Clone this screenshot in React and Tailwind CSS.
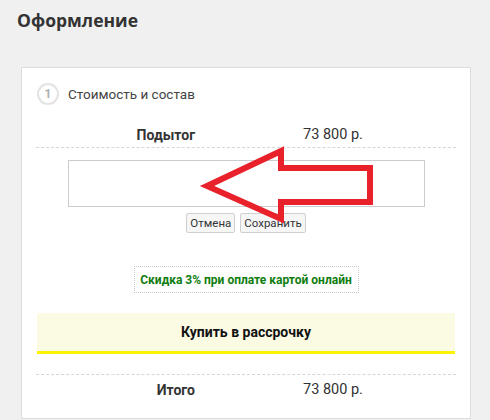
import React from 'react';

const font = { fontFamily: 'Roboto, "Noto Sans", sans-serif' };

function SumRow({ label, value, className = '' }) {
  return (
    <div className={`flex items-center ${className}`}>
      <div className="w-[159px] text-right text-[14px] font-bold text-[#333]">{label}</div>
      <div className="ml-[108px] text-[14.5px] text-[#333]">{value}</div>
    </div>
  );
}

function RedArrow() {
  return (
    <svg className="pointer-events-none absolute left-0 top-0" width="490" height="420" viewBox="0 0 490 420">
      <polygon
        points="207,186 281,151 281,168 370,168 370,202 281,202 281,219"
        fill="none"
        stroke="#e8212b"
        strokeWidth="6"
        strokeLinejoin="miter"
        strokeMiterlimit="10"
      />
    </svg>
  );
}

export default function App() {
  return (
    <div className="relative min-h-[420px] w-[490px] overflow-hidden bg-[#f0f0f0]" style={font}>
      <h1
        className="pl-[17px] pt-[8px] text-[17.5px] font-bold leading-[24px] text-[#333]"
        style={{ fontFamily: '"Open Sans", sans-serif' }}
      >
        Оформление
      </h1>

      <div className="ml-[21px] mt-[35px] w-[450px] border border-[#dddddd] bg-white px-[14px] pb-[13px]">
        <div className="flex items-center pt-[15px]">
          <div className="ml-[1px] flex h-[22px] w-[22px] items-center justify-center rounded-full border-2 border-[#e3e3e3] text-[12px] font-bold text-[#b0b0b0]">
            1
          </div>
          <span className="ml-[9px] text-[13.5px] text-[#444]">Стоимость и состав</span>
        </div>

        <SumRow label="Подытог" value="73 800 р." className="mt-[18px] h-[25px] border-b border-dashed border-[#d6d6d6]" />

        <div className="mx-auto mt-[12px] h-[47px] w-[357px] border border-[#cccccc] bg-white" />

        <div className="mt-[6px] flex justify-center gap-[5px]">
          <button className="h-[20px] rounded-[2px] border border-[#d0d0d0] bg-[#f6f6f6] px-[3px] text-[11.5px] leading-[18px] text-[#333]">
            Отмена
          </button>
          <button className="h-[20px] rounded-[2px] border border-[#d0d0d0] bg-[#f6f6f6] px-[3px] text-[11.5px] leading-[18px] text-[#333]">
            Сохранить
          </button>
        </div>

        <div className="mt-[33px] flex justify-center">
          <div className="flex h-[27px] w-[225px] items-center justify-center whitespace-nowrap border border-dotted border-[#c8c8c8] text-[12px] font-bold text-[#0f7d0f]">
            Скидка 3% при оплате картой онлайн
          </div>
        </div>

        <div className="mx-[1px] mt-[20px] flex h-[41px] items-center justify-center border-b-[3px] border-[#fff200] bg-[#fbfbe4] text-[14px] font-bold text-[#111]">
          Купить в рассрочку
        </div>

        <SumRow label="Итого" value="73 800 р." className="mt-[20px] h-[31px] border-t border-dashed border-[#d6d6d6]" />
      </div>

      <RedArrow />
    </div>
  );
}
